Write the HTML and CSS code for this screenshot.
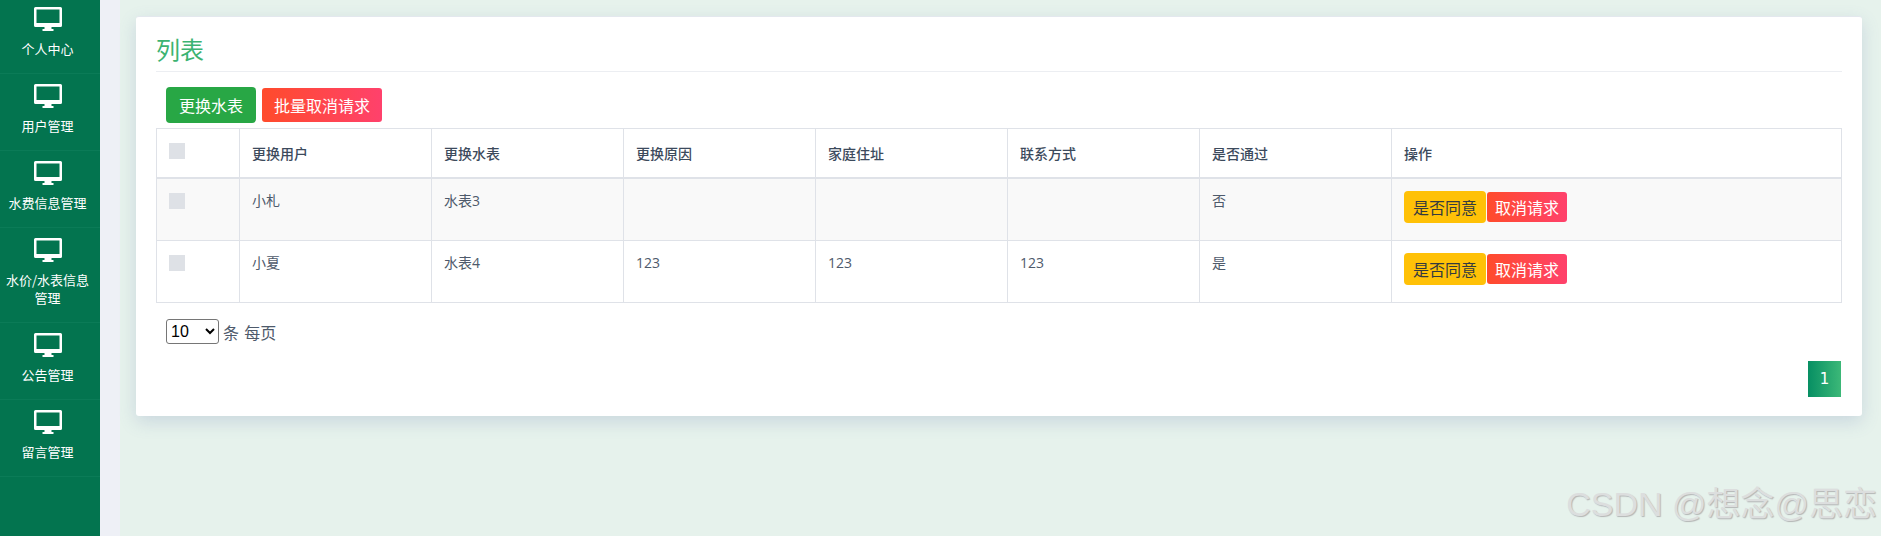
FILE: index.html
```html
<!DOCTYPE html>
<html lang="zh-CN">
<head>
<meta charset="utf-8">
<title>列表</title>
<link rel="stylesheet" href="styles.css">
</head>
<body>
<svg class="defs" width="0" height="0" aria-hidden="true">
  <symbol id="desktop" viewBox="0 0 28 24">
    <path fill-rule="evenodd" d="M1.5 0h25A1.5 1.5 0 0 1 28 1.500v17a1.500 1.500 0 0 1-1.500 1.500H17.500v2H19.500v2h-11v-2h2v-2H1.500A1.500 1.500 0 0 1 0 18.500v-17A1.500 1.500 0 0 1 1.500 0zM2.500 2.500v13.500h23V2.500z"/>
  </symbol>
</svg>
<div class="page">
  <nav class="sidebar">
    <a class="nav-item"><svg class="nav-icon"><use href="#desktop"/></svg><span class="nav-label">个人中心</span></a>
    <a class="nav-item"><svg class="nav-icon"><use href="#desktop"/></svg><span class="nav-label">用户管理</span></a>
    <a class="nav-item"><svg class="nav-icon"><use href="#desktop"/></svg><span class="nav-label">水费信息管理</span></a>
    <a class="nav-item"><svg class="nav-icon"><use href="#desktop"/></svg><span class="nav-label">水价/水表信息管理</span></a>
    <a class="nav-item"><svg class="nav-icon"><use href="#desktop"/></svg><span class="nav-label">公告管理</span></a>
    <a class="nav-item"><svg class="nav-icon"><use href="#desktop"/></svg><span class="nav-label">留言管理</span></a>
  </nav>
  <main class="main">
    <section class="card">
      <h2 class="card-title">列表</h2>
      <div class="toolbar">
        <button class="btn btn-green">更换水表</button>
        <button class="btn btn-red btn-bulk">批量取消请求</button>
      </div>
      <table class="table">
        <colgroup>
          <col class="col-check">
          <col class="col-data"><col class="col-data"><col class="col-data">
          <col class="col-data"><col class="col-data"><col class="col-data">
          <col>
        </colgroup>
        <thead>
          <tr>
            <th class="cell-check"><span class="check"></span></th>
            <th>更换用户</th>
            <th>更换水表</th>
            <th>更换原因</th>
            <th>家庭住址</th>
            <th>联系方式</th>
            <th>是否通过</th>
            <th>操作</th>
          </tr>
        </thead>
        <tbody>
          <tr class="row-alt">
            <td class="cell-check"><span class="check"></span></td>
            <td>小札</td>
            <td>水表3</td>
            <td></td>
            <td></td>
            <td></td>
            <td>否</td>
            <td class="cell-actions"><div class="actions"><button class="btn btn-yellow">是否同意</button><button class="btn btn-red btn-cancel">取消请求</button></div></td>
          </tr>
          <tr>
            <td class="cell-check"><span class="check"></span></td>
            <td>小夏</td>
            <td>水表4</td>
            <td>123</td>
            <td>123</td>
            <td>123</td>
            <td>是</td>
            <td class="cell-actions"><div class="actions"><button class="btn btn-yellow">是否同意</button><button class="btn btn-red btn-cancel">取消请求</button></div></td>
          </tr>
        </tbody>
      </table>
      <div class="page-size">
        <select class="size-select"><option>10</option><option>25</option><option>50</option></select>
        <span class="size-label">条 每页</span>
      </div>
      <div class="pagination"><span class="page-num">1</span></div>
    </section>
  </main>
</div>
<div class="watermark">CSDN @想念@思恋</div>
</body>
</html>
```
FILE: styles.css
```css
* { box-sizing: border-box; }
html, body { margin: 0; height: 100%; overflow: hidden; }
body {
  font-family: "Open Sans", "Noto Sans CJK SC", sans-serif;
  color: #4a5568;
  background: #eef0f6;
  position: relative;
}
.defs { position: absolute; }
.page { display: flex; height: 536px; }

.sidebar {
  width: 100px;
  flex: none;
  background: #03744f;
  overflow: hidden;
}
.nav-item {
  display: flex;
  flex-direction: column;
  align-items: center;
  padding: 10px 5px 15px 0;
  border-bottom: 1px solid #0b7b57;
  color: #fff;
}
.nav-item:first-child { margin-top: -3px; }
.nav-icon { width: 28px; height: 24px; fill: #fff; margin-bottom: 9px; flex: none; }
.nav-label {
  font-size: 13px;
  line-height: 18px;
  text-align: center;
  font-family: "Noto Sans CJK SC", sans-serif;
}

.main {
  flex: 1;
  margin-left: 20px;
  background: #e6f2ec;
  padding: 16px 19px 0 16px;
}
.card {
  height: 400px;
  background: #fff;
  border-radius: 3px;
  border-top: 1px solid #e3e8ee;
  box-shadow: 0 6px 18px rgba(90, 110, 170, 0.2);
  padding: 19px 20px 20px;
}
.card-title {
  margin: 0;
  height: 36px;
  font-size: 24px;
  line-height: 26px;
  font-weight: 400;
  color: #3cb371;
  border-bottom: 1px solid #eceef2;
  font-family: "Noto Sans CJK SC", sans-serif;
}
.toolbar {
  display: flex;
  align-items: center;
  gap: 6px;
  height: 36px;
  margin: 15px 0 5px;
  padding-left: 10px;
}
.btn {
  border: 0;
  padding: 0;
  font-family: "Noto Sans CJK SC", sans-serif;
  font-size: 16px;
  line-height: 24px;
  color: #fff;
  display: inline-flex;
  align-items: center;
  justify-content: center;
}
.btn-green { width: 90px; height: 36px; border-radius: 4px; background: #28a745; }
.btn-red { background: linear-gradient(90deg, #ff4b2b, #ff416c); border-radius: 3px; }
.btn-bulk { width: 120px; height: 34px; }
.btn-yellow { width: 82px; height: 32px; border-radius: 4px; background: #ffc107; color: #343a40; }
.btn-cancel { width: 80px; height: 30px; }

.table {
  width: 1686px;
  table-layout: fixed;
  border-collapse: collapse;
  font-size: 14px;
  line-height: 20px;
}
.col-check { width: 83px; }
.col-data { width: 192px; }
.table th, .table td {
  border: 1px solid #dfe2e8;
  padding: 12px;
  text-align: left;
  vertical-align: top;
}
.table th {
  height: 49px;
  vertical-align: bottom;
  font-weight: 500;
  color: #3c4a5c;
  border-bottom: 2px solid #dfe2e8;
  padding-bottom: 13px;
}
.table th.cell-check { vertical-align: top; padding-top: 14px; }
.table td { height: 62px; color: #4e5a6b; }
.row-alt td { height: 63px; background: #f9f9f9; }
.table td.cell-check { padding-top: 14px; }
.check { display: block; width: 16px; height: 16px; background: #dee1e6; }
.actions { display: flex; align-items: center; gap: 1px; }

.page-size {
  display: flex;
  align-items: center;
  gap: 4px;
  height: 25px;
  margin-top: 16px;
  padding-left: 10px;
  font-size: 16px;
  color: #4e5a6b;
}
.size-label { word-spacing: 1px; }
.size-select {
  width: 53px;
  height: 25px;
  font-family: "Liberation Sans", sans-serif;
  font-size: 16px;
  background: #fff;
  color: #000;
  border: 1px solid #767676;
  border-radius: 3px;
}
.pagination { display: flex; justify-content: flex-end; margin-top: 17px; padding-right: 1px; }
.page-num {
  width: 33px;
  height: 36px;
  display: flex;
  align-items: center;
  justify-content: center;
  background: linear-gradient(90deg, #078f63, #3cb878);
  color: #fff;
  font-family: "DejaVu Sans", sans-serif;
  font-size: 15px;
}
.watermark {
  position: absolute;
  right: 4px;
  bottom: 12px;
  font-family: "Liberation Sans", "Noto Sans CJK SC", sans-serif;
  font-size: 34px;
  line-height: 40px;
  white-space: nowrap;
  color: #dcdede;
  text-shadow: 1px 1px 1px #b4b6b6;
}
```
